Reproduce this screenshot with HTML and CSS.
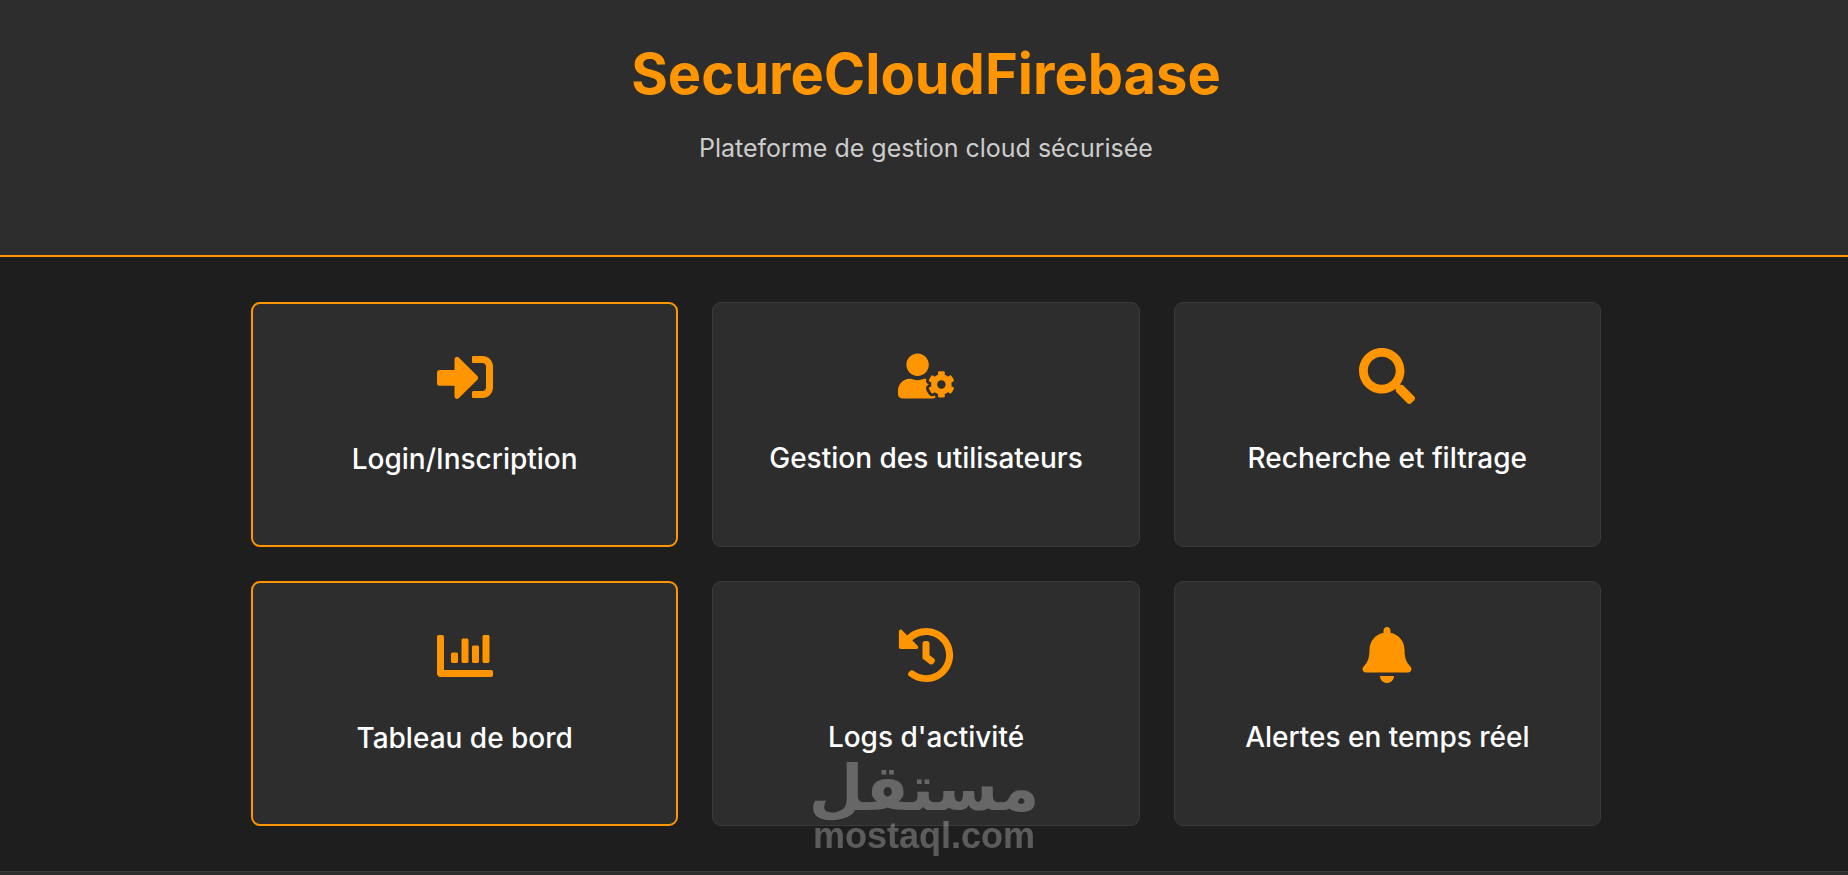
FILE: index.html
```html
<!DOCTYPE html>
<html lang="fr">
<head>
    <meta charset="UTF-8">
    <meta name="viewport" content="width=device-width, initial-scale=1.0">
    <title>SecureCloudFirebase</title>
    <link rel="stylesheet" href="styles.css">
</head>
<body>
    <header class="header">
        <h1>SecureCloudFirebase</h1>
        <p>Plateforme de gestion cloud sécurisée</p>
    </header>

    <main class="main">
        <nav class="cards">
            <a href="#login" class="card active">
                <svg class="icon" viewBox="0 0 512 512" aria-hidden="true"><path d="M416 448h-84c-6.6 0-12-5.4-12-12v-40c0-6.6 5.4-12 12-12h84c17.7 0 32-14.3 32-32V160c0-17.7-14.3-32-32-32h-84c-6.6 0-12-5.4-12-12V76c0-6.6 5.4-12 12-12h84c53 0 96 43 96 96v192c0 53-43 96-96 96zm-47-201L201 79c-15-15-41-4.5-41 17v96H24c-13.3 0-24 10.7-24 24v96c0 13.3 10.7 24 24 24h136v96c0 21.5 26 32 41 17l168-168c9.3-9.4 9.3-24.6 0-34z"/></svg>
                <h2>Login/Inscription</h2>
            </a>
            <a href="#users" class="card">
                <svg class="icon" viewBox="0 0 640 512" aria-hidden="true"><path d="M610.5 373.3c2.6-14.1 2.6-28.5 0-42.6l25.8-14.9c3-1.7 4.3-5.2 3.3-8.5-6.7-21.6-18.2-41.2-33.2-57.4-2.3-2.5-6-3.1-9-1.4l-25.8 14.9c-10.9-9.3-23.4-16.5-36.9-21.3v-29.8c0-3.4-2.4-6.4-5.7-7.1-22.3-5-45-4.8-66.2 0-3.3.7-5.7 3.7-5.7 7.1v29.8c-13.5 4.8-26 12-36.9 21.3l-25.8-14.9c-2.9-1.7-6.7-1.1-9 1.4-15 16.2-26.5 35.8-33.2 57.4-1 3.3.4 6.8 3.3 8.5l25.8 14.9c-2.6 14.1-2.6 28.5 0 42.6l-25.8 14.9c-3 1.7-4.3 5.2-3.3 8.5 6.7 21.6 18.2 41.1 33.2 57.4 2.3 2.5 6 3.1 9 1.4l25.8-14.9c10.9 9.3 23.4 16.5 36.9 21.3v29.8c0 3.4 2.4 6.4 5.7 7.1 22.3 5 45 4.8 66.2 0 3.3-.7 5.7-3.7 5.7-7.1v-29.8c13.5-4.8 26-12 36.9-21.3l25.8 14.9c2.9 1.7 6.7 1.1 9-1.4 15-16.2 26.5-35.8 33.2-57.4 1-3.3-.4-6.8-3.3-8.5l-25.8-14.9zM496 400.5c-26.8 0-48.5-21.8-48.5-48.5s21.8-48.5 48.5-48.5 48.5 21.8 48.5 48.5-21.7 48.5-48.5 48.5zM224 256c70.7 0 128-57.3 128-128S294.7 0 224 0 96 57.3 96 128s57.3 128 128 128zm201.2 226.5c-2.3-1.2-4.6-2.6-6.8-3.9l-7.9 4.6c-6 3.4-12.8 5.3-19.6 5.3-10.9 0-21.4-4.6-28.9-12.6-18.3-19.8-32.3-43.9-40.2-69.6-5.5-17.7 1.9-36.4 17.9-45.7l7.9-4.6c-.1-2.6-.1-5.2 0-7.8l-7.9-4.6c-16-9.2-23.4-28-17.9-45.7.9-2.9 2.2-5.8 3.2-8.7-3.8-.3-7.5-1.2-11.4-1.2h-16.7c-22.2 10.2-46.9 16-72.9 16s-50.6-5.8-72.9-16h-16.7C60.2 288 0 348.2 0 422.4V464c0 26.5 21.5 48 48 48h352c10.1 0 19.5-3.2 27.2-8.5-1.2-3.8-2-7.7-2-11.8v-9.2z"/></svg>
                <h2>Gestion des utilisateurs</h2>
            </a>
            <a href="#search" class="card">
                <svg class="icon" viewBox="0 0 512 512" aria-hidden="true"><path d="M505 442.7L405.3 343c-4.5-4.5-10.6-7-17-7H372c27.6-35.3 44-79.7 44-128C416 93.1 322.9 0 208 0S0 93.1 0 208s93.1 208 208 208c48.3 0 92.7-16.4 128-44v16.3c0 6.4 2.5 12.5 7 17l99.7 99.7c9.4 9.4 24.6 9.4 33.9 0l28.3-28.3c9.4-9.4 9.4-24.6.1-34zM208 336c-70.7 0-128-57.2-128-128 0-70.7 57.2-128 128-128 70.7 0 128 57.2 128 128 0 70.7-57.2 128-128 128z"/></svg>
                <h2>Recherche et filtrage</h2>
            </a>
            <a href="#dashboard" class="card active">
                <svg class="icon" viewBox="0 0 512 512" aria-hidden="true"><path d="M332.8 320h38.4c6.4 0 12.8-6.4 12.8-12.8V172.8c0-6.4-6.4-12.8-12.8-12.8h-38.4c-6.4 0-12.8 6.4-12.8 12.8v134.4c0 6.4 6.4 12.8 12.8 12.8zm96 0h38.4c6.4 0 12.8-6.4 12.8-12.8V76.8c0-6.4-6.4-12.8-12.8-12.8h-38.4c-6.4 0-12.8 6.4-12.8 12.8v230.4c0 6.4 6.4 12.8 12.8 12.8zm-288 0h38.4c6.4 0 12.8-6.4 12.8-12.8v-70.4c0-6.4-6.4-12.8-12.8-12.8h-38.4c-6.4 0-12.8 6.4-12.8 12.8v70.4c0 6.4 6.4 12.8 12.8 12.8zm96 0h38.4c6.4 0 12.8-6.4 12.8-12.8V108.8c0-6.4-6.4-12.8-12.8-12.8h-38.4c-6.4 0-12.8 6.4-12.8 12.8v198.4c0 6.4 6.4 12.8 12.8 12.8zM496 384H64V80c0-8.84-7.16-16-16-16H16C7.16 64 0 71.16 0 80v336c0 17.67 14.33 32 32 32h464c8.84 0 16-7.16 16-16v-32c0-8.84-7.16-16-16-16z"/></svg>
                <h2>Tableau de bord</h2>
            </a>
            <a href="#logs" class="card">
                <svg class="icon" viewBox="0 0 512 512" aria-hidden="true"><path d="M504 255.531c.253 136.64-111.18 248.372-247.82 248.468-59.015.042-113.223-20.53-155.822-54.911-11.077-8.94-11.905-25.541-1.839-35.607l11.267-11.267c8.609-8.609 22.353-9.551 31.891-1.984C173.062 425.135 212.781 440 256 440c101.705 0 184-82.311 184-184 0-101.705-82.311-184-184-184-48.814 0-93.149 18.969-126.068 49.932l50.754 50.754c10.08 10.08 2.941 27.314-11.313 27.314H24c-8.837 0-16-7.163-16-16V38.627c0-14.254 17.234-21.393 27.314-11.314l49.372 49.372C129.209 34.136 189.552 8 256 8c136.81 0 247.747 110.78 248 247.531zm-180.912 78.784l9.823-12.63c8.138-10.463 6.253-25.542-4.21-33.679L288 256.349V152c0-13.255-10.745-24-24-24h-16c-13.255 0-24 10.745-24 24v135.651l65.409 50.874c10.463 8.137 25.541 6.253 33.679-4.21z"/></svg>
                <h2>Logs d'activité</h2>
            </a>
            <a href="#alerts" class="card">
                <svg class="icon" viewBox="0 0 448 512" aria-hidden="true"><path d="M224 512c35.32 0 63.97-28.65 63.97-64H160.03c0 35.35 28.65 64 63.97 64zm215.39-149.71c-19.32-20.76-55.47-51.99-55.47-154.29 0-77.7-54.48-139.9-127.94-155.16V32c0-17.67-14.32-32-31.98-32s-31.98 14.33-31.98 32v20.84C118.56 68.1 64.08 130.3 64.08 208c0 102.3-36.15 133.53-55.47 154.29-6 6.45-8.66 14.16-8.61 21.71.11 16.4 12.98 32 32.1 32h383.8c19.12 0 32-15.6 32.1-32 .05-7.55-2.61-15.27-8.61-21.71z"/></svg>
                <h2>Alertes en temps réel</h2>
            </a>
        </nav>
    </main>

    <footer class="footer"></footer>

    <div class="watermark">
        <span class="watermark-ar" lang="ar" dir="rtl">مستقل</span>
        <span class="watermark-en">mostaql.com</span>
    </div>
</body>
</html>
```

FILE: styles.css
```css
* {
    box-sizing: border-box;
    margin: 0;
    padding: 0;
}
body {
    display: flex;
    flex-direction: column;
    min-height: 100vh;
    background: #1e1e1e;
    color: white;
    font-family: Inter, sans-serif;
}
.header {
    padding: 40px 20px 91px 24px;
    text-align: center;
    background: #2d2d2d;
    border-bottom: 2px solid #ff9500;
}
.header h1 {
    font-size: 56px;
    line-height: 68px;
    font-weight: 700;
    color: #ff9500;
    margin-bottom: 24px;
}
.header p {
    font-size: 25px;
    line-height: 32px;
    color: #cccccc;
}
.main {
    padding: 45px 20px 45px 24px;
}
.cards {
    display: grid;
    grid-template-columns: repeat(3, 1fr);
    gap: 34px;
    max-width: 1350px;
    margin: 0 auto;
}
.card {
    display: flex;
    flex-direction: column;
    align-items: center;
    min-height: 245px;
    padding: 45px 24px;
    background: #2d2d2d;
    border: 1px solid #3a3a3a;
    border-radius: 9px;
    color: white;
    text-align: center;
    text-decoration: none;
}
.card.active {
    border: 2px solid #ff9500;
}
.card h2 {
    font-size: 28px;
    line-height: 34px;
    font-weight: 500;
}
.icon {
    width: 56px;
    height: 56px;
    margin-bottom: 37px;
    fill: #ff9500;
}
.footer {
    flex: 1;
    background: #2d2d2d;
    border-top: 1px solid #3a3a3a;
}
.watermark {
    position: fixed;
    left: 0;
    right: 0;
    bottom: 20px;
    display: flex;
    flex-direction: column;
    align-items: center;
    color: white;
    opacity: 0.28;
    pointer-events: none;
}
.watermark-ar {
    font-family: "DejaVu Sans", sans-serif;
    font-size: 63px;
    line-height: 56px;
    font-weight: 700;
}
.watermark-en {
    font-family: "Liberation Sans", sans-serif;
    font-size: 36px;
    line-height: 38px;
    font-weight: 700;
}
```
